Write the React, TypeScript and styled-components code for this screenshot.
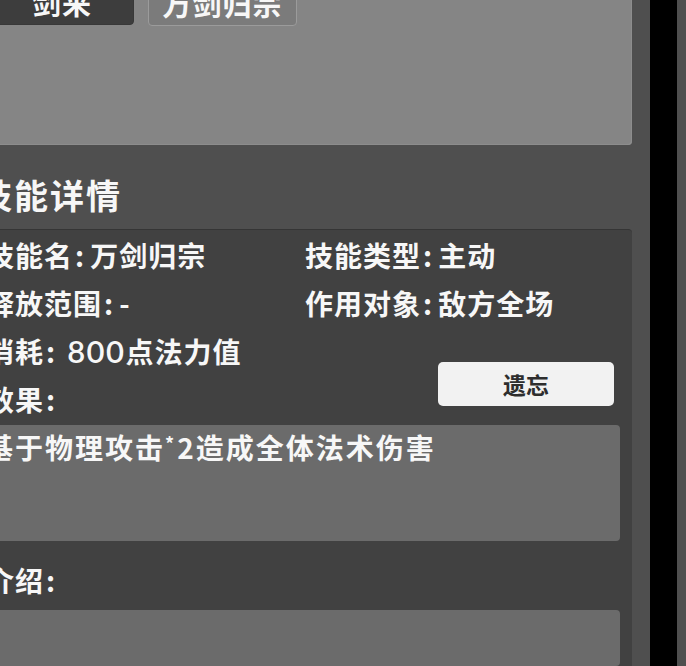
import React from 'react';
import styled, { createGlobalStyle } from 'styled-components';

const GlobalStyle = createGlobalStyle`
    body {
        margin: 0;
        background: #4f4f4f;
        overflow: hidden;
        font-family: 'Noto Sans CJK SC', 'Noto Sans', sans-serif;
        color: #f7f7f7;
    }
`;

const skillInfo = [
    { label: '技能名', value: '万剑归宗' },
    { label: '技能类型', value: '主动' },
    { label: '释放范围', value: '-' },
    { label: '作用对象', value: '敌方全场' },
];

const App = () => {
    return (
        <>
            <GlobalStyle />
            <Screen>
                <Main>
                    <TopPanel>
                        <TabRow>
                            <Tab $active>剑来</Tab>
                            <Tab>万剑归宗</Tab>
                        </TabRow>
                    </TopPanel>
                    <Heading>技能详情</Heading>
                    <DetailPanel>
                        <InfoGrid>
                            {skillInfo.map((item) => (
                                <InfoCell key={item.label}>
                                    {item.label}
                                    <Colon>:</Colon>
                                    {item.value}
                                </InfoCell>
                            ))}
                            <InfoCell>
                                消耗<Colon>:</Colon>
                                <Cost>800</Cost>点法力值
                            </InfoCell>
                            <ForgetButton>遗忘</ForgetButton>
                            <InfoCell>
                                效果<Colon>:</Colon>
                            </InfoCell>
                        </InfoGrid>
                        <TextBox $height="116px">
                            基于物理攻击<Star>*</Star>2造成全体法术伤害
                        </TextBox>
                        <SectionLabel>
                            介绍<Colon>:</Colon>
                        </SectionLabel>
                        <TextBox $height="auto" $grow />
                    </DetailPanel>
                </Main>
                <Gutter />
                <BlackBar />
            </Screen>
        </>
    );
};

export default App;

const Screen = styled.div`
    display: flex;
    width: 686px;
    height: 666px;
    overflow: hidden;
`;

const Main = styled.main`
    display: flex;
    flex-direction: column;
    flex: none;
    width: 672px;
    margin-left: -40px;
`;

const TopPanel = styled.section`
    height: 145px;
    flex: none;
    background: #858585;
    border-bottom-right-radius: 4px;
    box-shadow: inset -1px -1px 0 #8d8d8d;
`;

const TabRow = styled.div`
    display: flex;
    gap: 14px;
    margin-top: -24px;
    padding-left: 30px;
`;

const Tab = styled.div<{ $active?: boolean }>`
    display: flex;
    align-items: center;
    justify-content: center;
    box-sizing: border-box;
    width: ${(p) => (p.$active ? '144px' : '149px')};
    height: ${(p) => (p.$active ? '49px' : '50px')};
    background: ${(p) => (p.$active ? '#3d3d3d' : '#7b7b7b')};
    border: 1px solid ${(p) => (p.$active ? '#383838' : '#9b9b9b')};
    border-radius: 4px;
    font-size: 29px;
    font-weight: 700;
    letter-spacing: 1px;
    line-height: 1;
    padding-top: 4px;
`;

const Heading = styled.h2`
    display: flex;
    align-items: center;
    box-sizing: border-box;
    height: 84px;
    margin: 0;
    padding: 14px 0 0 18px;
    font-size: 34px;
    font-weight: 700;
    letter-spacing: 2px;
`;

const DetailPanel = styled.section`
    display: flex;
    flex-direction: column;
    flex: 1;
    background: #414141;
    border-top: 1px solid #353535;
    border-top-right-radius: 4px;
    padding-top: 1px;
`;

const InfoGrid = styled.div`
    display: grid;
    grid-template-columns: 319px 1fr;
    grid-auto-rows: 48px;
    padding-left: 26px;
`;

const InfoCell = styled.div`
    display: flex;
    align-items: center;
    font-size: 28px;
    font-weight: 700;
    letter-spacing: 1px;
    white-space: nowrap;
`;

const Colon = styled.span`
    margin: 0 6px 0 2px;
    letter-spacing: 0;
`;

const Cost = styled.span`
    font-family: 'Lato', 'Noto Sans', sans-serif;
    font-size: 31px;
    font-weight: 600;
    margin-left: 6px;
    letter-spacing: 1.5px;
`;

const Star = styled.span`
    font-size: 18px;
    vertical-align: 8px;
    margin-right: 1px;
`;

const ForgetButton = styled.button`
    grid-column: 2;
    grid-row: 3 / span 2;
    align-self: start;
    width: 176px;
    height: 44px;
    margin: 35px 0 0 133px;
    background: #f2f2f2;
    border: none;
    border-radius: 5px;
    color: #2e2e2e;
    font-family: 'Noto Sans CJK SC', sans-serif;
    font-size: 23px;
    font-weight: 700;
    padding: 0;
`;

const TextBox = styled.div<{ $height: string; $grow?: boolean }>`
    height: ${(p) => p.$height};
    flex: ${(p) => (p.$grow ? '1' : 'none')};
    margin: 2px 12px 0 0;
    padding: 0 0 0 25px;
    background: #6b6b6b;
    border-top-right-radius: 4px;
    border-bottom-right-radius: 4px;
    font-size: 28px;
    font-weight: 700;
    letter-spacing: 2px;
    line-height: 36px;
    white-space: nowrap;
`;

const SectionLabel = styled.div`
    height: 52px;
    padding-top: 15px;
    padding-left: 26px;
    font-size: 28px;
    font-weight: 700;
    letter-spacing: 1px;
    line-height: 48px;
    box-sizing: content-box;
`;

const Gutter = styled.div`
    flex: none;
    width: 18px;
    background: #4f4f4f;
`;

const BlackBar = styled.div`
    flex: none;
    width: 27px;
    background: #000;
`;
